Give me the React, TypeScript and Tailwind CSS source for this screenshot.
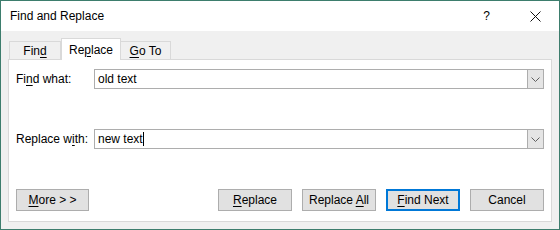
import React from "react";

const U = ({ c }: { c: string }) => <span className="underline underline-offset-[2px] decoration-[1px]">{c}</span>;

function Chevron() {
  return (
    <svg width="9" height="5" viewBox="0 0 9 5" className="block">
      <path d="M0.5 0.5 L4.5 4.5 L8.5 0.5" fill="none" stroke="#606060" strokeWidth="1" />
    </svg>
  );
}

function Combo({ value, caret }: { value: string; caret?: boolean }) {
  return (
    <div className="flex-1 h-[20px] border border-[#adadad] bg-white flex items-stretch">
      <div className="flex-1 flex items-center pl-[3px] text-[12px] text-black leading-none">
        <span>{value}</span>
        {caret && <span className="inline-block w-[1px] h-[14px] bg-black" />}
      </div>
      <div className="w-[16px] bg-[#e5e5e5] border-l border-[#adadad] flex items-center justify-center">
        <Chevron />
      </div>
    </div>
  );
}

function Btn({ children, primary, w = "w-[74px]" }: { children: React.ReactNode; primary?: boolean; w?: string }) {
  return (
    <div
      className={`${w} h-[22px] flex items-center justify-center bg-[#e1e1e1] text-[12px] text-black ${
        primary ? "border-2 border-[#0078d7]" : "border border-[#adadad]"
      }`}
    >
      {children}
    </div>
  );
}

export default function App() {
  return (
    <div
      className="w-[560px] h-[230px] border border-[#3d7d6d] bg-[#f0f0f0] flex flex-col overflow-hidden text-black"
      style={{ fontFamily: '"Segoe UI", "Liberation Sans", Arial, sans-serif' }}
    >
      {/* title bar */}
      <div className="h-[30px] bg-white flex items-center pl-[9px] text-[12px] shrink-0">
        <span>Find and Replace</span>
        <div className="flex-1" />
        <span className="text-[12px] mr-[40px]">?</span>
        <svg width="11" height="11" viewBox="0 0 11 11" className="mr-[18px]">
          <path d="M0.5 0.5 L10.5 10.5 M10.5 0.5 L0.5 10.5" stroke="#111" strokeWidth="1" />
        </svg>
      </div>

      {/* body */}
      <div className="flex-1 flex flex-col px-[7px] pb-[7px]">
        {/* tabs */}
        <div className="h-[28px] flex items-end pl-[1px]">
          <div className="w-[52px] h-[18px] border border-b-0 border-[#d9d9d9] bg-[#f0f0f0] flex items-center justify-center text-[12px]">
            <span>Fin<U c="d" /></span>
          </div>
          <div className="w-[60px] h-[22px] border border-b-0 border-[#d9d9d9] bg-white flex items-center justify-center text-[12px] relative top-[1px] z-10">
            <span>Re<U c="p" />lace</span>
          </div>
          <div className="w-[50px] h-[18px] border border-b-0 border-l-0 border-[#d9d9d9] bg-[#f0f0f0] flex items-center justify-center text-[12px]">
            <span><U c="G" />o To</span>
          </div>
        </div>

        {/* panel */}
        <div className="flex-1 bg-white border border-[#d9d9d9] flex flex-col px-[7px] pt-[9px]">
          <div className="flex items-center h-[20px]">
            <div className="w-[78px] text-[12px]">
              Fi<U c="n" />d what:
            </div>
            <Combo value="old text" />
          </div>
          <div className="flex items-center h-[20px] mt-[40px]">
            <div className="w-[78px] text-[12px]">
              Replace w<U c="i" />th:
            </div>
            <Combo value="new text" caret />
          </div>
          <div className="flex items-center h-[22px] mt-[40px]">
            <Btn w="w-[73px]">
              <span><U c="M" />ore &gt; &gt;</span>
            </Btn>
            <div className="flex-1" />
            <div className="flex gap-[10px]">
              <Btn>
                <span><U c="R" />eplace</span>
              </Btn>
              <Btn>
                <span>Replace <U c="A" />ll</span>
              </Btn>
              <Btn primary>
                <span><U c="F" />ind Next</span>
              </Btn>
              <Btn>
                <span>Cancel</span>
              </Btn>
            </div>
          </div>
        </div>
      </div>
    </div>
  );
}
